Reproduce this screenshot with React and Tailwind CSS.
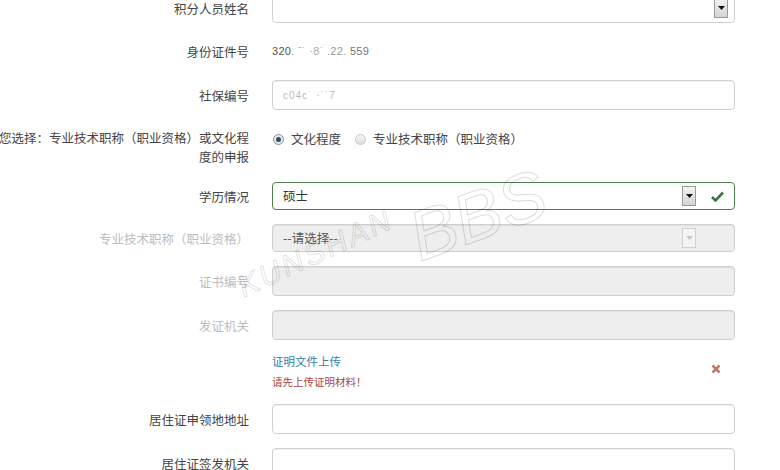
import React from "react";

const font = { fontFamily: '"Noto Sans CJK SC", "Noto Sans", sans-serif' };

function Label({ children, disabled }) {
  return (
    <div
      className={`w-[249px] shrink-0 text-right text-[12.5px] leading-[19px] ${disabled ? "text-[#bdbdbd]" : "text-[#444]"}`}
    >
      {children}
    </div>
  );
}

function SelBox({ disabled }) {
  return (
    <div
      className={`w-[14px] h-[20px] border flex items-center justify-center ${disabled ? "border-[#d0d0d0] bg-[#f4f4f4]" : "border-[#9a9a9a] bg-gradient-to-b from-[#f2f2f2] to-[#d4d4d4]"}`}
    >
      <svg width="7" height="4" viewBox="0 0 7 4">
        <path d="M0 0 L7 0 L3.5 4 Z" fill={disabled ? "#c4c4c4" : "#111"} />
      </svg>
    </div>
  );
}

function Row({ label, disabled, children, className = "", h = "h-[30px]" }) {
  return (
    <div className={`flex items-center gap-[23px] ${h} ${className}`}>
      <Label disabled={disabled}>{label}</Label>
      {children}
    </div>
  );
}

function Input({ disabled, children, h = "h-[30px]" }) {
  return (
    <div
      className={`w-[463px] ${h} rounded-[4px] border border-[#cfcfcf] shadow-[inset_0_1px_1px_rgba(0,0,0,0.06)] flex items-center px-[10px] ${disabled ? "bg-[#eeeeee]" : "bg-white"}`}
    >
      {children}
    </div>
  );
}

function Radio({ checked }) {
  return checked ? (
    <div className="w-[11px] h-[11px] shrink-0 rounded-full border border-[#8a9099] bg-[#e8ecf0] flex items-center justify-center">
      <div className="w-[5px] h-[5px] rounded-full bg-[#2f4b66]" />
    </div>
  ) : (
    <div className="w-[11px] h-[11px] shrink-0 rounded-full border border-[#c9c9c9] bg-gradient-to-b from-[#f6f6f6] to-[#dedede]" />
  );
}

export default function App() {
  const stroke = { WebkitTextStroke: "1px rgba(0,0,0,0.14)" };
  const wm = { fontFamily: '"Liberation Sans", sans-serif' };
  return (
    <div className="relative w-[780px] h-[470px] overflow-hidden bg-white" style={font}>
      <div className="flex flex-col -mt-[7px]">
        <Row label="积分人员姓名">
          <Input>
            <div className="flex-1" />
            <div className="mr-[-4px]">
              <SelBox />
            </div>
          </Input>
        </Row>

        <Row label="身份证件号" className="mt-[13px]">
          <div className="text-[11px] text-[#555] tracking-[0.3px]" style={wm}>
            320<span className="text-[#999]">.</span>
            <span className="text-[#aaa]"> ˉ˙ ·8˙ </span>
            <span className="text-[#999]">.22. </span>
            <span className="text-[#777]">559</span>
          </div>
        </Row>

        <Row label="社保编号" className="mt-[14px]">
          <Input>
            <span className="text-[10px] text-[#bbb] tracking-[1px]" style={wm}>
              c04c˙ ·˙˙7
            </span>
          </Input>
        </Row>

        <div className="flex gap-[23px] mt-[18px] h-[38px]">
          <div className="w-[249px] shrink-0 flex justify-end">
            <div className="text-right text-[12.5px] leading-[19px] text-[#444] whitespace-nowrap">
              您选择：专业技术职称（职业资格）或文化程
              <br />
              度的申报
            </div>
          </div>
          <div className="flex items-center h-[22px] text-[12.5px] text-[#444] pl-[1px]">
            <Radio checked />
            <span className="ml-[7px]">文化程度</span>
            <div className="ml-[14px]">
              <Radio />
            </div>
            <span className="ml-[7px]">专业技术职称（职业资格）</span>
          </div>
        </div>

        <Row label="学历情况" className="mt-[16px]" h="h-[28px]">
          <div className="relative">
            <div className="w-[463px] h-[28px] rounded-[4px] border border-[#4f7f4a] bg-white flex items-center px-[10px]">
              <span className="text-[12.5px] text-[#333]">硕士</span>
              <div className="flex-1" />
              <div className="mr-[28px]">
                <SelBox />
              </div>
            </div>
            <div className="absolute right-0 top-0 w-[34px] h-[28px] flex items-center justify-center pr-[2px]">
              <svg width="13" height="11" viewBox="0 0 13 11">
                <path d="M1 6 L4.5 9.5 L12 1.5" stroke="#3c763d" strokeWidth="2.6" fill="none" />
              </svg>
            </div>
          </div>
        </Row>

        <Row label="专业技术职称（职业资格）" disabled className="mt-[14px]" h="h-[28px]">
          <Input disabled h="h-[28px]">
            <span className="text-[12.5px] text-[#555]">--请选择--</span>
            <div className="flex-1" />
            <div className="mr-[28px]">
              <SelBox disabled />
            </div>
          </Input>
        </Row>

        <Row label="证书编号" disabled className="mt-[14px]">
          <Input disabled />
        </Row>

        <Row label="发证机关" disabled className="mt-[14px]">
          <Input disabled />
        </Row>

        <div className="flex gap-[23px] mt-[12px]">
          <div className="w-[249px] shrink-0" />
          <div className="relative w-[463px]">
            <div className="text-[11.5px] leading-[18px] text-[#3a7ca5]">证明文件上传</div>
            <div className="text-[10.5px] leading-[18px] mt-[3px] text-[#a94442]">请先上传证明材料！</div>
            <div className="absolute right-0 top-[7px] w-[34px] h-[20px] flex items-center justify-center pr-[4px]">
              <svg width="10" height="10" viewBox="0 0 10 10">
                <path d="M1.5 1.5 L8.5 8.5 M8.5 1.5 L1.5 8.5" stroke="#c4796f" strokeWidth="2.6" />
              </svg>
            </div>
          </div>
        </div>

        <Row label="居住证申领地地址" className="mt-[13px]">
          <Input />
        </Row>

        <Row label="居住证签发机关" className="mt-[14px]">
          <Input />
        </Row>
      </div>

      <div
        className="pointer-events-none absolute left-[246px] top-[230px] h-[72px] origin-bottom-left -rotate-[25deg] flex items-end whitespace-nowrap italic"
        style={wm}
      >
        <span className="text-[30px] leading-none tracking-[3px] text-transparent" style={stroke}>
          KUNSHAN
        </span>
      </div>
      <div
        className="pointer-events-none absolute left-[424px] top-[198px] h-[74px] origin-bottom-left -rotate-[20deg] flex items-end whitespace-nowrap italic"
        style={wm}
      >
        <span className="text-[70px] leading-none text-transparent" style={stroke}>
          BBS
        </span>
      </div>
    </div>
  );
}
